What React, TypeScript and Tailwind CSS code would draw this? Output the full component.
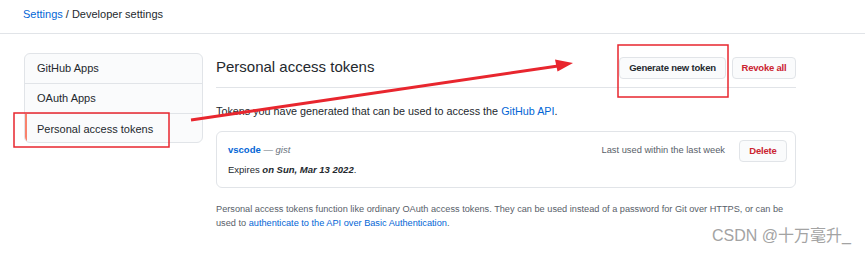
import React from 'react';

const sans = { fontFamily: '"Liberation Sans", Arial, sans-serif' };

const SideItem: React.FC<{ label: string; active?: boolean; last?: boolean }> = ({ label, active, last }) => (
    <div
        className={`h-[30px] flex items-center pl-3 text-[11px] text-[#24292e] ${last ? '' : 'border-b border-[#e1e4e8]'} ${active ? 'border-l-2 border-l-[#f9826c] pl-[10px]' : ''}`}
    >
        {label}
    </div>
);

const Annotations: React.FC = () => (
    <svg className="absolute inset-0 pointer-events-none" width="865" height="254" viewBox="0 0 865 254">
        <rect x="14" y="113" width="155" height="34" fill="none" stroke="#e8262e" strokeWidth="1.5" />
        <rect x="618" y="45" width="110" height="52" fill="none" stroke="#e8262e" strokeWidth="1.5" />
        <line x1="191" y1="120" x2="558" y2="66" stroke="#e8262e" strokeWidth="3" />
        <polygon points="573,63 555,59.5 557.5,71.5" fill="#e8262e" />
    </svg>
);

const btn = 'h-[22px] text-[9.5px] font-bold tracking-[-0.2px] bg-[#fafbfc] border border-[#e1e4e8] rounded-[4px]';

const App: React.FC = () => {
    return (
        <div className="relative w-[865px] h-[254px] bg-white overflow-hidden" style={sans}>
            <div className="h-[34px] border-b border-[#e1e4e8] pl-[23px] pt-[6px] text-[11px] leading-[16px]">
                <a className="text-[#0366d6]">Settings</a>
                <span className="text-[#24292e]"> / Developer settings</span>
            </div>

            <div className="flex pl-6 pt-[19px]">
                <div className="w-[179px] h-[90px] border border-[#e1e4e8] rounded-md bg-[#fafbfc] overflow-hidden">
                    <SideItem label="GitHub Apps" />
                    <SideItem label="OAuth Apps" />
                    <SideItem label="Personal access tokens" active last />
                </div>

                <div className="ml-[13px] w-[580px]">
                    <div className="flex items-center justify-between pt-[4px] pb-[8px] border-b border-[#e1e4e8]">
                        <h2 className="text-[15px] text-[#24292e] font-normal leading-[20px] -mt-[2px]">Personal access tokens</h2>
                        <div className="flex gap-[6px]">
                            <button className={`${btn} w-[107px] text-[#24292e]`}>Generate new token</button>
                            <button className={`${btn} w-[64px] text-[#cb2431]`}>Revoke all</button>
                        </div>
                    </div>

                    <p className="mt-[15px] text-[10.8px] leading-[16px] text-[#24292e]">
                        Tokens you have generated that can be used to access the <a className="text-[#0366d6]">GitHub API</a>.
                    </p>

                    <div className="mt-[12px] h-[57px] border border-[#e1e4e8] rounded-md pl-[11px] pr-[8px] pt-[8px]">
                        <div className="flex items-center justify-between h-[22px]">
                            <div className="text-[9.5px] leading-[14px] -mt-[2px]">
                                <a className="text-[#0366d6] font-bold">vscode</a>
                                <span className="text-[#6a737d]"> — <em>gist</em></span>
                            </div>
                            <div className="flex items-center gap-[14px]">
                                <span className="text-[9.3px] leading-[14px] text-[#586069] -mt-[2px]">Last used within the last week</span>
                                <button className={`${btn} w-[48px] text-[#cb2431]`}>Delete</button>
                            </div>
                        </div>
                        <div className="mt-[1px] text-[9.5px] leading-[14px] text-[#24292e]">
                            Expires <em className="font-bold">on Sun, Mar 13 2022</em>.
                        </div>
                    </div>

                    <div className="mt-[14px] text-[9.2px] leading-[14px] text-[#586069] whitespace-nowrap">
                        <p>Personal access tokens function like ordinary OAuth access tokens. They can be used instead of a password for Git over HTTPS, or can be</p>
                        <p>
                            used to <a className="text-[#0366d6]">authenticate to the API over Basic Authentication</a>.
                        </p>
                    </div>
                </div>
            </div>

            <div
                className="absolute right-[14px] top-[226px] text-[16px] leading-[20px] text-[#a3a3a3] whitespace-nowrap"
                style={{ fontFamily: '"Liberation Sans", "Noto Sans CJK SC", sans-serif' }}
            >
                CSDN @十万毫升_
            </div>

            <Annotations />
        </div>
    );
};

export default App;
